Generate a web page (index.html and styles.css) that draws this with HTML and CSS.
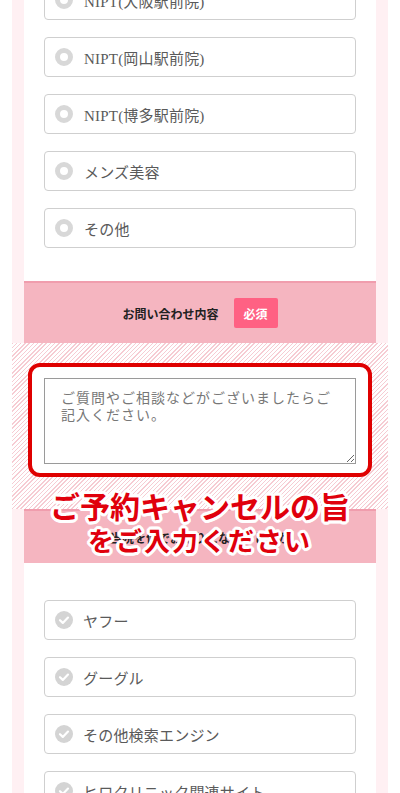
FILE: index.html
```html
<!DOCTYPE html>
<html lang="ja">

<head>
    <meta charset="UTF-8">
    <meta name="viewport" content="width=device-width, initial-scale=1.0">
    <title>お問い合わせフォーム</title>
    <link rel="stylesheet" href="styles.css">
</head>

<body>
    <div class="frame">
        <div class="form-card">
            <!-- ご希望の院・診療 -->
            <div class="option-list option-list-top">
                <label class="option"><span class="radio"></span>NIPT(大阪駅前院)</label>
                <label class="option"><span class="radio"></span>NIPT(岡山駅前院)</label>
                <label class="option"><span class="radio"></span>NIPT(博多駅前院)</label>
                <label class="option"><span class="radio"></span>メンズ美容</label>
                <label class="option"><span class="radio"></span>その他</label>
            </div>

            <!-- お問い合わせ内容 -->
            <div class="field-head">
                <span class="field-label">お問い合わせ内容</span>
                <span class="required">必須</span>
            </div>

            <div class="annotated">
                <div class="inquiry">
                    <div class="highlight">
                        <textarea class="message" placeholder="ご質問やご相談などがございましたらご記入ください。"></textarea>
                    </div>
                </div>

                <div class="field-head field-head-short">
                    <span class="field-label">当院を何でお知りになりましたか</span>
                </div>

                <!-- 注釈 -->
                <div class="callout">
                    <div class="callout-main">ご予約キャンセルの旨</div>
                    <div class="callout-sub">をご入力ください</div>
                </div>
            </div>

            <!-- きっかけ -->
            <div class="option-list">
                <label class="option"><span class="check"><svg viewBox="0 0 18 18" width="18" height="18"><path d="M5 9.2l2.8 2.7L13 6.6" fill="none" stroke="#fff" stroke-width="2.2" stroke-linecap="round" stroke-linejoin="round"/></svg></span>ヤフー</label>
                <label class="option"><span class="check"><svg viewBox="0 0 18 18" width="18" height="18"><path d="M5 9.2l2.8 2.7L13 6.6" fill="none" stroke="#fff" stroke-width="2.2" stroke-linecap="round" stroke-linejoin="round"/></svg></span>グーグル</label>
                <label class="option"><span class="check"><svg viewBox="0 0 18 18" width="18" height="18"><path d="M5 9.2l2.8 2.7L13 6.6" fill="none" stroke="#fff" stroke-width="2.2" stroke-linecap="round" stroke-linejoin="round"/></svg></span>その他検索エンジン</label>
                <label class="option"><span class="check"><svg viewBox="0 0 18 18" width="18" height="18"><path d="M5 9.2l2.8 2.7L13 6.6" fill="none" stroke="#fff" stroke-width="2.2" stroke-linecap="round" stroke-linejoin="round"/></svg></span>ヒロクリニック関連サイト</label>
            </div>
        </div>
    </div>
</body>

</html>
```

FILE: styles.css
```css
/* 基础样式 */
body {
    margin: 0;
    background-color: #fff;
    font-family: "Liberation Serif", "Noto Sans CJK JP", serif;
    overflow: hidden;
}

/* 外枠 */
.frame {
    margin: 0 12px;
    padding: 0 12px;
    background-color: #fff0f3;
}

.form-card {
    background-color: #fff;
}

/* 選択肢 */
.option-list {
    display: flex;
    flex-direction: column;
    gap: 17px;
    padding: 37px 20px 33px;
}

.option-list-top {
    margin-top: -57px;
}

.option {
    display: flex;
    align-items: center;
    height: 38px;
    padding: 0 10px;
    border: 1px solid #cfcfcf;
    border-radius: 4px;
    font-size: 15px;
    color: #5a5a5a;
    letter-spacing: 0.2px;
}

.radio {
    width: 8px;
    height: 8px;
    margin-right: 11px;
    border: 5px solid #d8d8d8;
    border-radius: 50%;
    background-color: #fff;
}

.check {
    display: flex;
    width: 18px;
    height: 18px;
    margin-right: 10px;
    border-radius: 50%;
    background-color: #d4d4d4;
}

/* 見出し帯 */
.field-head {
    display: flex;
    justify-content: center;
    align-items: center;
    gap: 15px;
    height: 60px;
    border-top: 2px solid #f09dad;
    background-color: #f5b5c0;
}

.field-head-short {
    height: 52px;
}

.field-label {
    font-family: "Noto Sans CJK JP", sans-serif;
    font-size: 12px;
    font-weight: bold;
    color: #222;
}

.required {
    display: flex;
    justify-content: center;
    align-items: center;
    width: 44px;
    height: 30px;
    border-radius: 2px;
    background-color: #ff6183;
    font-family: "Noto Sans CJK JP", sans-serif;
    font-size: 12px;
    font-weight: bold;
    color: #fff;
}

/* 注釈エリア */
.annotated {
    position: relative;
}

.inquiry {
    margin: 0 -12px;
    padding: 20px 16px 32px;
    background-color: #fff;
    background-image: repeating-linear-gradient(135deg, #f6ccd3 0 1px, rgba(255, 255, 255, 0) 1px 3px);
}

.highlight {
    padding: 11px 12px 9px;
    border: 4px solid #df0000;
    border-radius: 12px;
    background-color: #fff;
}

.message {
    display: block;
    box-sizing: border-box;
    width: 100%;
    height: 86px;
    padding: 10px 16px;
    border: 1px solid #9a9a9a;
    font-family: "Noto Sans CJK JP", sans-serif;
    font-size: 14px;
    line-height: 17px;
    letter-spacing: 1px;
    resize: vertical;
}

.message::placeholder {
    color: #777;
}

.callout {
    position: absolute;
    top: 145px;
    left: 0;
    right: 0;
    text-align: center;
    font-family: "Noto Sans CJK JP", sans-serif;
    font-weight: bold;
    color: #e0000c;
    text-shadow:
        3px 0 0 #fff, -3px 0 0 #fff, 0 3px 0 #fff, 0 -3px 0 #fff,
        2px 2px 0 #fff, -2px 2px 0 #fff, 2px -2px 0 #fff, -2px -2px 0 #fff,
        3px 1px 0 #fff, -3px 1px 0 #fff, 3px -1px 0 #fff, -3px -1px 0 #fff,
        1px 3px 0 #fff, -1px 3px 0 #fff, 1px -3px 0 #fff, -1px -3px 0 #fff;
}

.callout-main {
    font-size: 30px;
    line-height: 35px;
}

.callout-sub {
    font-size: 26px;
    line-height: 34px;
    letter-spacing: 2px;
}
```
